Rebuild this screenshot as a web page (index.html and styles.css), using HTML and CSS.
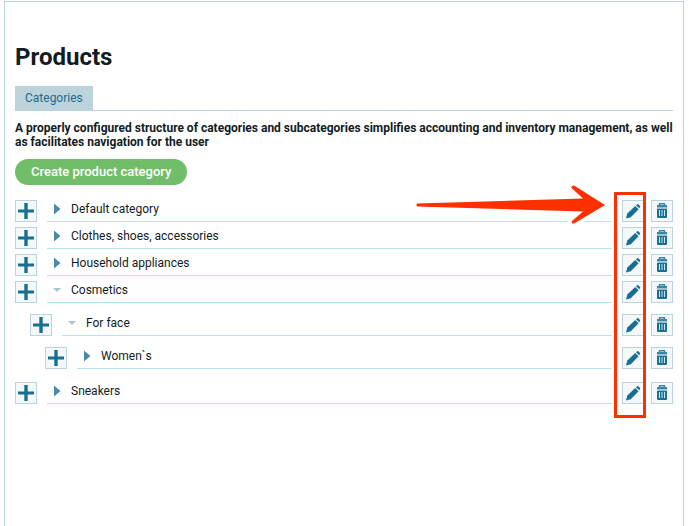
FILE: index.html
```html
<!DOCTYPE html>
<html lang="en">
<head>
<meta charset="utf-8">
<title>Products</title>
<link rel="stylesheet" href="styles.css">
</head>
<body>
<svg class="sprite" aria-hidden="true">
  <symbol id="plus" viewBox="0 0 20 20"><path d="M8.300 2h3.400v6.400H18v3.200h-6.300V18H8.300v-6.400H2V8.400h6.300z" fill="#176f92"/></symbol>
  <symbol id="pencil" viewBox="0 0 20 20">
    <path d="M3 17.500L4.300 12.600L12.200 4.900L15.600 8.200L7.800 16.200Z" fill="#176f92"/>
    <path d="M13 4.200L14.200 3.200Q14.900 2.800 15.600 3.500L17 4.900Q17.500 5.600 16.900 6.300L16.200 7.300Z" fill="#176f92"/>
  </symbol>
  <symbol id="trash" viewBox="0 0 20 20">
    <path d="M7.500 4.500V2.800H12.500V4.500" fill="none" stroke="#3b86a3" stroke-width="1.400"/>
    <path d="M5 4h10v2H5z" fill="#3b86a3"/>
    <path d="M5 6h10v2H5z" fill="#9cc0cf"/>
    <path d="M5 8h10V16q0 1-1 1H6q-1 0-1-1z" fill="#176f92"/>
    <path d="M7.500 9v6M10 9v6M12.500 9v6" stroke="#d5e6ec" stroke-width="1"/>
  </symbol>
  <symbol id="closed" viewBox="0 0 8 12"><path d="M1 0.500L7.500 6L1 11.500z" fill="#4a8aa6"/></symbol>
  <symbol id="open" viewBox="0 0 8 12"><path d="M0 4h8L4 8z" fill="#a9c6d3"/></symbol>
</svg>
<main class="panel">
  <h1 class="title">Products</h1>
  <nav class="tabs"><a class="tab" href="#categories">Categories</a></nav>
  <p class="intro">A properly configured structure of categories and subcategories simplifies accounting and inventory management, as well as facilitates navigation for the user</p>
  <button class="create" type="button">Create product category</button>
  <div class="tree-wrap" id="categories">
    <ul class="tree">
      <li>
        <div class="row">
          <button class="icon-btn" type="button" aria-label="Add to Default category"><svg><use href="#plus"/></svg></button>
          <a class="name" href="#default"><svg class="caret"><use href="#closed"/></svg>Default category</a>
          <button class="icon-btn" type="button" aria-label="Edit Default category"><svg><use href="#pencil"/></svg></button>
          <button class="icon-btn remove" type="button" aria-label="Delete Default category"><svg><use href="#trash"/></svg></button>
        </div>
      </li>
      <li>
        <div class="row">
          <button class="icon-btn" type="button" aria-label="Add to Clothes, shoes, accessories"><svg><use href="#plus"/></svg></button>
          <a class="name" href="#clothes"><svg class="caret"><use href="#closed"/></svg>Clothes, shoes, accessories</a>
          <button class="icon-btn" type="button" aria-label="Edit Clothes, shoes, accessories"><svg><use href="#pencil"/></svg></button>
          <button class="icon-btn remove" type="button" aria-label="Delete Clothes, shoes, accessories"><svg><use href="#trash"/></svg></button>
        </div>
      </li>
      <li>
        <div class="row">
          <button class="icon-btn" type="button" aria-label="Add to Household appliances"><svg><use href="#plus"/></svg></button>
          <a class="name" href="#household"><svg class="caret"><use href="#closed"/></svg>Household appliances</a>
          <button class="icon-btn" type="button" aria-label="Edit Household appliances"><svg><use href="#pencil"/></svg></button>
          <button class="icon-btn remove" type="button" aria-label="Delete Household appliances"><svg><use href="#trash"/></svg></button>
        </div>
      </li>
      <li>
        <div class="row">
          <button class="icon-btn" type="button" aria-label="Add to Cosmetics"><svg><use href="#plus"/></svg></button>
          <a class="name" href="#cosmetics"><svg class="caret"><use href="#open"/></svg>Cosmetics</a>
          <button class="icon-btn" type="button" aria-label="Edit Cosmetics"><svg><use href="#pencil"/></svg></button>
          <button class="icon-btn remove" type="button" aria-label="Delete Cosmetics"><svg><use href="#trash"/></svg></button>
        </div>
        <ul class="branch">
          <li>
            <div class="row">
              <button class="icon-btn" type="button" aria-label="Add to For face"><svg><use href="#plus"/></svg></button>
              <a class="name" href="#face"><svg class="caret"><use href="#open"/></svg>For face</a>
              <button class="icon-btn" type="button" aria-label="Edit For face"><svg><use href="#pencil"/></svg></button>
              <button class="icon-btn remove" type="button" aria-label="Delete For face"><svg><use href="#trash"/></svg></button>
            </div>
            <ul class="branch">
              <li>
                <div class="row">
                  <button class="icon-btn" type="button" aria-label="Add to Women`s"><svg><use href="#plus"/></svg></button>
                  <a class="name" href="#women"><svg class="caret"><use href="#closed"/></svg>Women`s</a>
                  <button class="icon-btn" type="button" aria-label="Edit Women`s"><svg><use href="#pencil"/></svg></button>
                  <button class="icon-btn remove" type="button" aria-label="Delete Women`s"><svg><use href="#trash"/></svg></button>
                </div>
              </li>
            </ul>
          </li>
        </ul>
      </li>
      <li>
        <div class="row">
          <button class="icon-btn" type="button" aria-label="Add to Sneakers"><svg><use href="#plus"/></svg></button>
          <a class="name" href="#sneakers"><svg class="caret"><use href="#closed"/></svg>Sneakers</a>
          <button class="icon-btn" type="button" aria-label="Edit Sneakers"><svg><use href="#pencil"/></svg></button>
          <button class="icon-btn remove" type="button" aria-label="Delete Sneakers"><svg><use href="#trash"/></svg></button>
        </div>
      </li>
    </ul>
    <div class="highlight"></div>
    <svg class="arrow" viewBox="0 0 190 42" aria-hidden="true">
      <path d="M157 38L174 27" stroke="#fff" stroke-width="11" stroke-linecap="round"/>
      <path d="M1 19.500L167 14.500L155.500 4Q155 1.500 158 1.500L189 21L158 39.500Q155 40 156 37L167 27.500L1 22.500Q0 21 1 19.500Z" fill="#ff2f00"/>
    </svg>
  </div>
</main>
</body>
</html>
```
FILE: styles.css
```css
* {
  box-sizing: border-box;
}

body {
  margin: 0;
  padding: 1px 5px 0 4px;
  min-height: 100vh;
  display: flex;
  flex-direction: column;
  background: #fff;
  color: #111c24;
  font: 12px/14px Roboto, sans-serif;
}

.sprite {
  position: absolute;
  width: 0;
  height: 0;
}

.panel {
  flex: 1;
  padding: 40px 10px 0;
  border: 1px solid #bcd3db;
  border-bottom: 0;
}

.title {
  margin: 0 0 14px;
  font-size: 24px;
  line-height: 30px;
  font-weight: 700;
}

.tabs {
  display: flex;
  border-bottom: 1px solid #bcd3db;
}

.tab {
  padding: 5px 10px;
  background: #bcd3db;
  color: #1c6c8c;
  text-decoration: none;
}

.intro {
  margin: 10px 0;
  font-weight: 700;
}

.create {
  display: block;
  height: 26px;
  padding: 0 16px;
  border: 0;
  border-radius: 13px;
  background: #71bd6a;
  color: #fff;
  font: 500 13px/26px Roboto, sans-serif;
}

.tree-wrap {
  position: relative;
  margin-top: 15px;
}

.tree,
.branch {
  margin: 0;
  padding: 0;
  list-style: none;
}

.branch {
  padding: 6px 0 4px 15px;
}

.row {
  display: flex;
  gap: 10px;
  height: 22px;
  margin-bottom: 5px;
}

.icon-btn {
  flex: none;
  width: 22px;
  height: 22px;
  padding: 0;
  border: 1px solid #bcd3db;
  background: #f4f8f9;
}

.icon-btn svg {
  display: block;
  width: 20px;
  height: 20px;
}

.remove {
  margin-left: -3px;
}

.name {
  flex: 1;
  display: flex;
  align-items: center;
  gap: 10px;
  padding: 0 6px 3px;
  border-bottom: 1px solid #b3e5f5;
  color: inherit;
  text-decoration: none;
}

.caret {
  width: 8px;
  height: 12px;
}

.highlight {
  position: absolute;
  top: -8px;
  right: 27px;
  width: 32px;
  height: 226px;
  border: 3px solid #ff2f00;
  pointer-events: none;
}

.arrow {
  position: absolute;
  top: -16px;
  right: 67px;
  width: 190px;
  height: 42px;
  pointer-events: none;
}
```
